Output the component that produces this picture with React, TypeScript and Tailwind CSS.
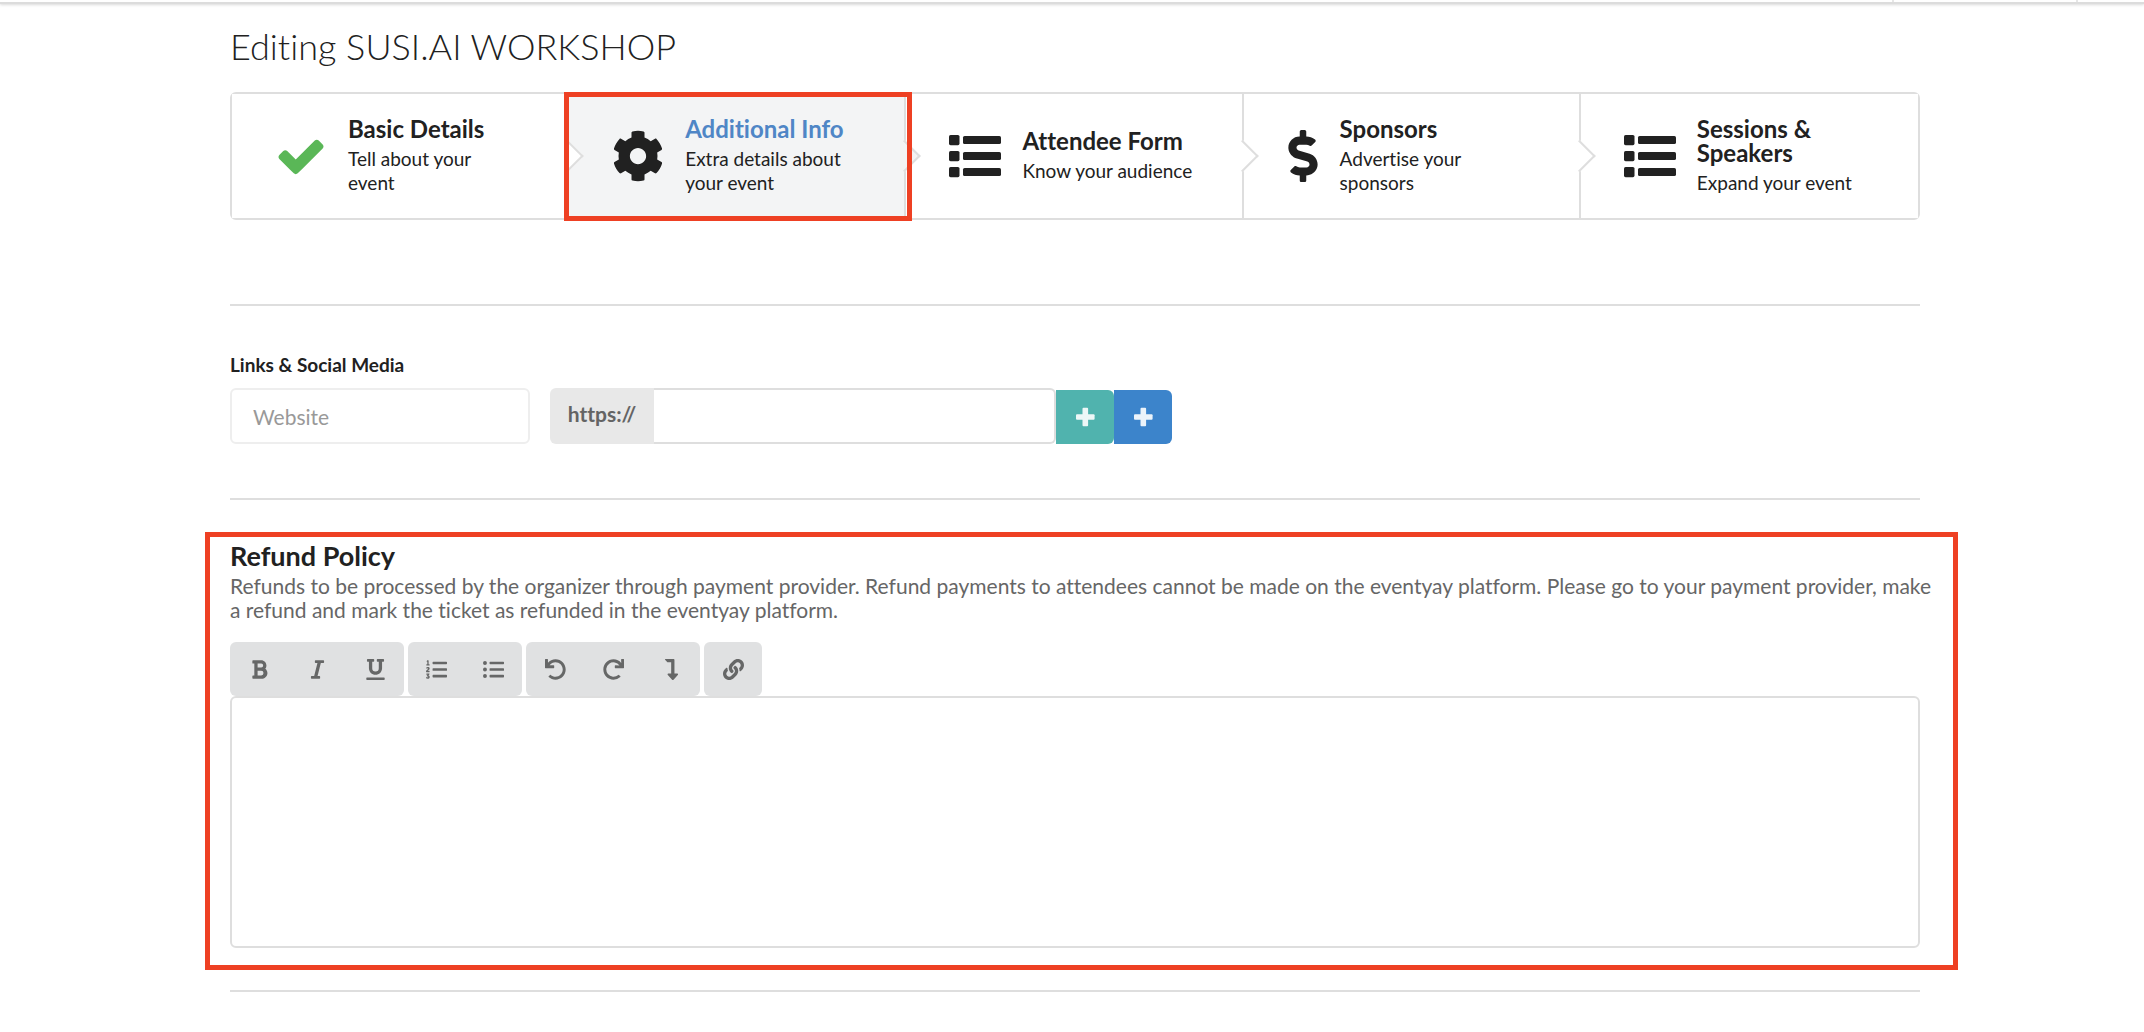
import type { ComponentType } from "react";
import {
  FaBold,
  FaCog,
  FaDollarSign,
  FaItalic,
  FaLevelDownAlt,
  FaLink,
  FaListOl,
  FaListUl,
  FaRedo,
  FaUnderline,
  FaUndo,
} from "react-icons/fa";

type Icon = ComponentType<{ className?: string }>;

type Step = {
  title: string;
  description: string;
  icon: Icon;
  iconClass: string;
  textClass: string;
  active?: boolean;
};

function CheckIcon({ className }: { className?: string }) {
  return (
    <svg viewBox="0 0 1792 1792" fill="currentColor" className={className} aria-hidden="true">
      <path d="M1671 566q0 40-28 68l-724 724-136 136q-28 28-68 28t-68-28l-136-136-362-362q-28-28-28-68t28-68l136-136q28-28 68-28t68 28l294 295 656-657q28-28 68-28t68 28l136 136q28 28 28 68z" />
    </svg>
  );
}

function PlusIcon({ className }: { className?: string }) {
  return (
    <svg viewBox="0 0 24 24" fill="currentColor" className={className} aria-hidden="true">
      <rect x="3" y="9.2" width="18.6" height="5.6" rx="1" />
      <rect x="9.5" y="2.7" width="5.6" height="18.6" rx="1" />
    </svg>
  );
}

function ListIcon({ className }: { className?: string }) {
  return (
    <svg viewBox="0 0 52 52" fill="currentColor" className={className} aria-hidden="true">
      {[5, 21, 37].map((y) => (
        <g key={y}>
          <rect x="0" y={y} width="10.5" height="10.2" rx="1.6" />
          <rect x="14" y={y + 1} width="38" height="8" rx="1.6" />
        </g>
      ))}
    </svg>
  );
}

const steps: Step[] = [
  {
    title: "Basic Details",
    description: "Tell about your event",
    icon: CheckIcon,
    iconClass: "w-[52px] text-[#5ab757]",
    textClass: "w-[140px]",
  },
  {
    title: "Additional Info",
    description: "Extra details about your event",
    icon: FaCog,
    iconClass: "w-[52px]",
    textClass: "w-[180px]",
    active: true,
  },
  {
    title: "Attendee Form",
    description: "Know your audience",
    icon: ListIcon,
    iconClass: "w-[52px]",
    textClass: "w-[190px]",
  },
  {
    title: "Sponsors",
    description: "Advertise your sponsors",
    icon: FaDollarSign,
    iconClass: "w-[32px]",
    textClass: "w-[150px]",
  },
  {
    title: "Sessions & Speakers",
    description: "Expand your event",
    icon: ListIcon,
    iconClass: "w-[52px]",
    textClass: "w-[180px]",
  },
];

const toolbar: { label: string; icon: Icon }[][] = [
  [
    { label: "Bold", icon: FaBold },
    { label: "Italic", icon: FaItalic },
    { label: "Underline", icon: FaUnderline },
  ],
  [
    { label: "Ordered list", icon: FaListOl },
    { label: "Unordered list", icon: FaListUl },
  ],
  [
    { label: "Undo", icon: FaUndo },
    { label: "Redo", icon: FaRedo },
    { label: "Insert line break", icon: FaLevelDownAlt },
  ],
  [{ label: "Link", icon: FaLink }],
];

function TopBar() {
  return (
    <div className="flex h-[4px] justify-end border-b-2 border-[#dcdcdc] bg-white shadow-[0_1px_3px_rgba(0,0,0,0.15)]">
      <div className="mr-[182px] w-[2px] bg-[#e6e6e6]" />
      <div className="mr-[66px] w-[2px] bg-[#e6e6e6]" />
    </div>
  );
}

function StepItem({ step, last }: { step: Step; last: boolean }) {
  const Glyph = step.icon;
  return (
    <li className="relative">
      <a
        href="#step"
        aria-current={step.active ? "step" : undefined}
        className={`flex h-full items-center gap-[21px] pl-[43px] ${last ? "" : "border-r-2 border-[#dedede]"} ${
          step.active ? "bg-[#f3f4f5]" : "bg-white"
        }`}
      >
        <Glyph className={`h-[52px] shrink-0 ${step.iconClass}`} />
        <span className={`flex flex-col gap-[6px] ${step.textClass}`}>
          <span className={`text-[24px] leading-6 font-bold ${step.active ? "text-[#4f86c6]" : ""}`}>{step.title}</span>
          <span className="text-[19px] leading-6">{step.description}</span>
        </span>
      </a>
      {!last && (
        <span
          className={`absolute top-1/2 right-[-10px] z-10 h-[23px] w-[23px] -translate-y-1/2 -rotate-45 border-r-2 border-b-2 border-[#dedede] ${
            step.active ? "bg-[#f3f4f5]" : "bg-white"
          }`}
        />
      )}
      {step.active && (
        <span className="pointer-events-none absolute -top-[2px] -right-[6px] -bottom-[3px] -left-[5px] z-20 border-[5px] border-[#ee4023]" />
      )}
    </li>
  );
}

function LinksSection() {
  return (
    <section className="pt-[45px] pb-[54px]">
      <label htmlFor="link-name" className="block text-[19px] leading-7 font-bold">
        Links & Social Media
      </label>
      <div className="mt-[9px] flex items-stretch">
        <input
          id="link-name"
          placeholder="Website"
          className="mr-5 h-14 w-[300px] rounded-[6px] border-2 border-[#eeeeee] px-[21px] text-[21px] outline-none placeholder:text-[#999999]"
        />
        <label
          htmlFor="link-url"
          className="flex w-[104px] items-center justify-center rounded-l-[6px] bg-[#e8e8e8] pb-1 text-[21px] font-bold text-[#646464]"
        >
          https://
        </label>
        <input
          id="link-url"
          className="h-14 w-[402px] rounded-r-[6px] border-2 border-l-0 border-[#dedede] px-5 text-[21px] outline-none"
        />
        <button
          aria-label="Add link"
          className="mt-[2px] flex w-[58px] items-center justify-center rounded-r-[6px] bg-[#50b3ae] text-[#edf7f7]"
        >
          <PlusIcon className="h-6 w-6" />
        </button>
        <button
          aria-label="Add social media"
          className="mt-[2px] flex w-[58px] items-center justify-center rounded-r-[6px] bg-[#3c84cb] text-[#ebf3fa]"
        >
          <PlusIcon className="h-6 w-6" />
        </button>
      </div>
    </section>
  );
}

function RefundSection() {
  return (
    <section className="relative pt-10 pb-[42px]">
      <div className="pointer-events-none absolute top-[32px] -right-[38px] bottom-[20px] -left-[25px] border-[5px] border-[#ee4023]" />
      <h2 id="refund" className="text-[27px] leading-8 font-bold">
        Refund Policy
      </h2>
      <p className="-mr-4 mt-[2px] text-[21px] leading-6 text-[#666666]">
        Refunds to be processed by the organizer through payment provider. Refund payments to attendees cannot be made
        on the eventyay platform. Please go to your payment provider, make a refund and mark the ticket as refunded in
        the eventyay platform.
      </p>
      <div className="mt-5 flex gap-1">
        {toolbar.map((group) => (
          <div key={group[0].label} className="flex h-[54px] rounded-[6px] bg-[#e0e1e2]">
            {group.map(({ label, icon: Glyph }) => (
              <button
                key={label}
                aria-label={label}
                className={`flex items-center justify-center text-[#666767] ${
                  group.length === 2 ? "w-[57px]" : "w-[58px]"
                }`}
              >
                <Glyph className="h-[21px] w-[21px]" />
              </button>
            ))}
          </div>
        ))}
      </div>
      <textarea
        aria-labelledby="refund"
        className="block h-[252px] w-full resize-none rounded-[6px] border-2 border-[#dedede] p-5 text-[21px] outline-none"
      />
    </section>
  );
}

export default function App() {
  return (
    <div className="min-h-screen bg-white font-['Lato',sans-serif] text-[#212121] [font-variant-ligatures:none]">
      <TopBar />
      <main className="mr-[224px] ml-[230px]">
        <h1 className="pt-5 text-[36px] leading-[44px] font-light">Editing SUSI.AI WORKSHOP</h1>
        <ol className="mt-6 grid min-h-32 grid-cols-5 rounded-[6px] border-2 border-[#dedede]">
          {steps.map((step, i) => (
            <StepItem key={step.title} step={step} last={i === steps.length - 1} />
          ))}
        </ol>
        <hr className="mt-[84px] border-t-2 border-[#dedede]" />
        <LinksSection />
        <hr className="border-t-2 border-[#dedede]" />
        <RefundSection />
        <hr className="border-t-2 border-[#dedede]" />
      </main>
    </div>
  );
}
